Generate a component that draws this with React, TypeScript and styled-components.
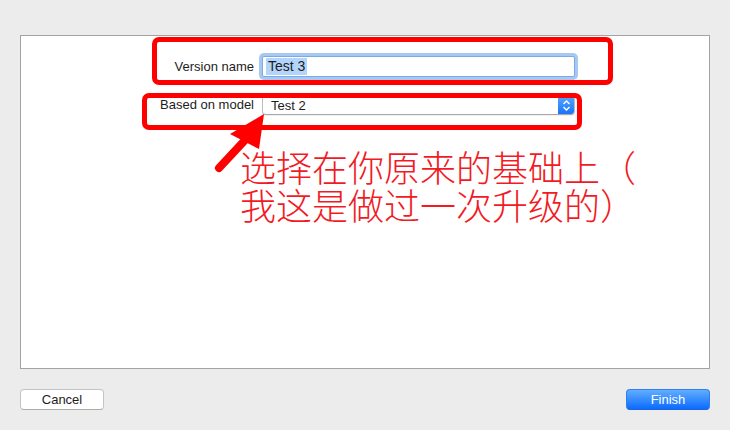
import styled, { createGlobalStyle } from 'styled-components'

const Global = createGlobalStyle`
  html, body {
    margin: 0;
    padding: 0;
    background: #ececec;
  }
  body {
    width: 730px;
    height: 430px;
    overflow: hidden;
    font-family: 'Liberation Sans', Arial, sans-serif;
    font-size: 13px;
    color: #1d1d1d;
  }
`

const Window = styled.div`
  padding: 35px 20px 0;
  display: flex;
  flex-direction: column;
`

const Panel = styled.div`
  position: relative;
  height: 334px;
  box-sizing: border-box;
  background: #fff;
  border: 1px solid #a3a3a3;
`

const Form = styled.div`
  display: grid;
  grid-template-columns: 233px 313px;
  column-gap: 8px;
  row-gap: 18px;
  padding-top: 20px;
  align-items: center;
`

const Label = styled.label`
  text-align: right;
  white-space: nowrap;
  line-height: 20px;
`

const TextField = styled.div`
  height: 21px;
  box-sizing: border-box;
  border: 1px solid #7eaae4;
  border-radius: 2px;
  box-shadow: 0 0 0 3px #a6c9f3;
  background: #fff;
  display: flex;
  align-items: center;
  padding-left: 3px;
`

const Selection = styled.span`
  background: #b3d5fd;
  line-height: 17px;
  padding: 0 2px;
  font-size: 14px;
`

const Select = styled.div`
  height: 20px;
  box-sizing: border-box;
  border: 1px solid #bcbcbc;
  border-bottom-color: #a8a8a8;
  border-radius: 4px;
  background: #fff;
  display: flex;
  align-items: center;
  overflow: hidden;
  box-shadow: 0 1px 0 rgba(0, 0, 0, 0.06);
`

const SelectText = styled.span`
  flex: 1;
  padding-left: 8px;
`

const Stepper = styled.span`
  width: 17px;
  align-self: stretch;
  margin: -1px -1px -1px 0;
  background: linear-gradient(#5aa9ff, #1771fb);
  border-radius: 0 4px 4px 0;
  display: flex;
  align-items: center;
  justify-content: center;
`

const Note = styled.div`
  margin: 32px 0 0 219px;
  font-family: 'Noto Sans CJK SC', 'Noto Sans', sans-serif;
  font-size: 36px;
  font-weight: 300;
  color: #f21a24;
  white-space: nowrap;
`

const NoteLine = styled.div`
  height: 38px;
  line-height: 38px;
`

const RedBox = styled.div<{ $left: number; $top: number; $w: number; $h: number }>`
  position: absolute;
  left: ${(p) => p.$left}px;
  top: ${(p) => p.$top}px;
  width: ${(p) => p.$w}px;
  height: ${(p) => p.$h}px;
  box-sizing: border-box;
  border: 5px solid #fe0000;
  border-radius: 7px;
  pointer-events: none;
`

const Arrow = styled.svg`
  position: absolute;
  left: 179px;
  top: 69px;
`

const Footer = styled.div`
  margin-top: 20px;
  display: flex;
  justify-content: space-between;
`

const Button = styled.button<{ $primary?: boolean }>`
  width: 84px;
  height: 21px;
  box-sizing: border-box;
  border-radius: 4px;
  font-family: 'Liberation Sans', Arial, sans-serif;
  font-size: 13px;
  padding: 0 0 1px;
  border: 1px solid ${(p) => (p.$primary ? '#2f7ff0' : '#c4c4c4')};
  border-bottom-color: ${(p) => (p.$primary ? '#1f63e0' : '#acacac')};
  background: ${(p) => (p.$primary ? 'linear-gradient(#62adff, #0a6bff)' : '#fff')};
  color: ${(p) => (p.$primary ? '#fff' : '#1d1d1d')};
`

export default function App() {
  return (
    <Window>
      <Global />
      <Panel>
        <Form>
          <Label>Version name</Label>
          <TextField>
            <Selection>Test 3</Selection>
          </TextField>
          <Label>Based on model</Label>
          <Select>
            <SelectText>Test 2</SelectText>
            <Stepper>
              <svg width="9" height="13" viewBox="0 0 9 13" fill="none" stroke="#fff" strokeWidth="1.4">
                <path d="M1.5 5 L4.5 2 L7.5 5" />
                <path d="M1.5 8 L4.5 11 L7.5 8" />
              </svg>
            </Stepper>
          </Select>
        </Form>
        <Note>
          <NoteLine>选择在你原来的基础上（</NoteLine>
          <NoteLine>我这是做过一次升级的）</NoteLine>
        </Note>
        <RedBox $left={131} $top={1} $w={461} $h={48} />
        <RedBox $left={121} $top={57} $w={440} $h={37} />
        <Arrow width="80" height="80" viewBox="0 0 80 80">
          <polygon points="64,9 30,29 59,44" fill="#fe0000" />
          <line x1="47" y1="33" x2="19" y2="63" stroke="#fe0000" strokeWidth="8" strokeLinecap="round" />
        </Arrow>
      </Panel>
      <Footer>
        <Button>Cancel</Button>
        <Button $primary>Finish</Button>
      </Footer>
    </Window>
  )
}
